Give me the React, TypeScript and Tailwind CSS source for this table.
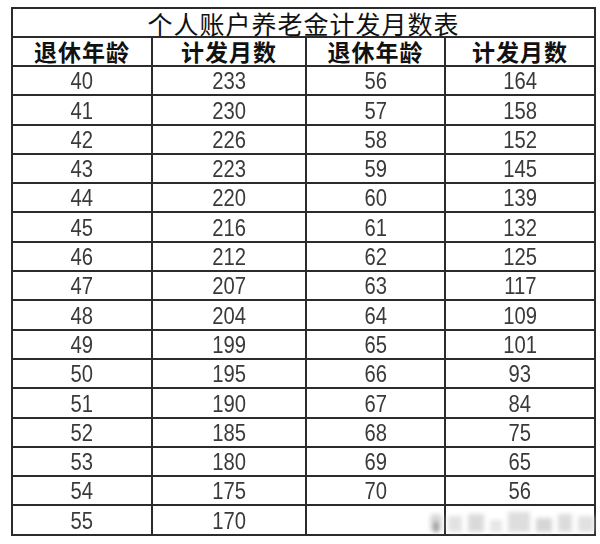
const left: [number, number][] = [
  [40, 233], [41, 230], [42, 226], [43, 223], [44, 220], [45, 216], [46, 212], [47, 207],
  [48, 204], [49, 199], [50, 195], [51, 190], [52, 185], [53, 180], [54, 175], [55, 170],
];
const right: [number, number][] = [
  [56, 164], [57, 158], [58, 152], [59, 145], [60, 139], [61, 132], [62, 125], [63, 117],
  [64, 109], [65, 101], [66, 93], [67, 84], [68, 75], [69, 65], [70, 56],
];

const cjk = { fontFamily: '"Noto Sans CJK SC", sans-serif' };
const num = { fontFamily: '"Liberation Sans", Arial, sans-serif' };

function Cell({ value }: { value?: number }) {
  return (
    <div className="h-[29.3px] border-r-2 border-b-2 border-[#2b2b2b] flex items-end justify-center pb-[1px]">
      {value !== undefined && (
        <span className="inline-block text-[23px] leading-none text-[#3a3a3a] scale-x-[0.88]" style={num}>
          {value}
        </span>
      )}
    </div>
  );
}

function Head({ label }: { label: string }) {
  return (
    <div
      className="h-[29px] border-r-2 border-b-2 border-[#2b2b2b] flex items-center justify-center"
      style={cjk}
    >
      <span className="text-[23px] leading-[23px] font-bold text-[#111] tracking-[1px]">{label}</span>
    </div>
  );
}

export default function App() {
  return (
    <div className="relative w-[600px] h-[544px] bg-white pt-[7px] pl-[11px]">
      <div className="grid grid-cols-[140px_154px_139px_150px] w-[585px] border-l-2 border-t-2 border-[#2b2b2b]">
        <div
          className="col-span-4 h-[29px] border-r-2 border-b-2 border-[#2b2b2b] flex items-end justify-center"
          style={cjk}
        >
          <span className="text-[25px] leading-[25px] text-[#111] tracking-[1px]">个人账户养老金计发月数表</span>
        </div>
        <Head label="退休年龄" />
        <Head label="计发月数" />
        <Head label="退休年龄" />
        <Head label="计发月数" />
        {left.map(([age, months], i) => (
          <div key={age} className="contents">
            <Cell value={age} />
            <Cell value={months} />
            <Cell value={right[i]?.[0]} />
            <Cell value={right[i]?.[1]} />
          </div>
        ))}
      </div>

      {/* blurred watermark lying over the last row */}
      <div className="absolute left-[430px] top-[508px] flex items-end gap-[6px] h-[24px] blur-[2px] opacity-80">
        <div className="w-[12px] h-[18px] rounded-sm bg-[#cfcfcf] flex items-end justify-center">
          <div className="w-[4px] h-[10px] bg-[#777]" />
        </div>
        <div className="w-[14px] h-[16px] bg-[#dcdcdc]" />
        <div className="w-[16px] h-[18px] bg-[#d2d2d2]" />
        <div className="w-[12px] h-[12px] bg-[#e0e0e0]" />
        <div className="w-[22px] h-[20px] bg-[#d6d6d6]" />
        <div className="w-[16px] h-[14px] bg-[#cccccc]" />
        <div className="w-[14px] h-[18px] bg-[#d4d4d4]" />
        <div className="w-[16px] h-[16px] bg-[#dadada]" />
      </div>
    </div>
  );
}
